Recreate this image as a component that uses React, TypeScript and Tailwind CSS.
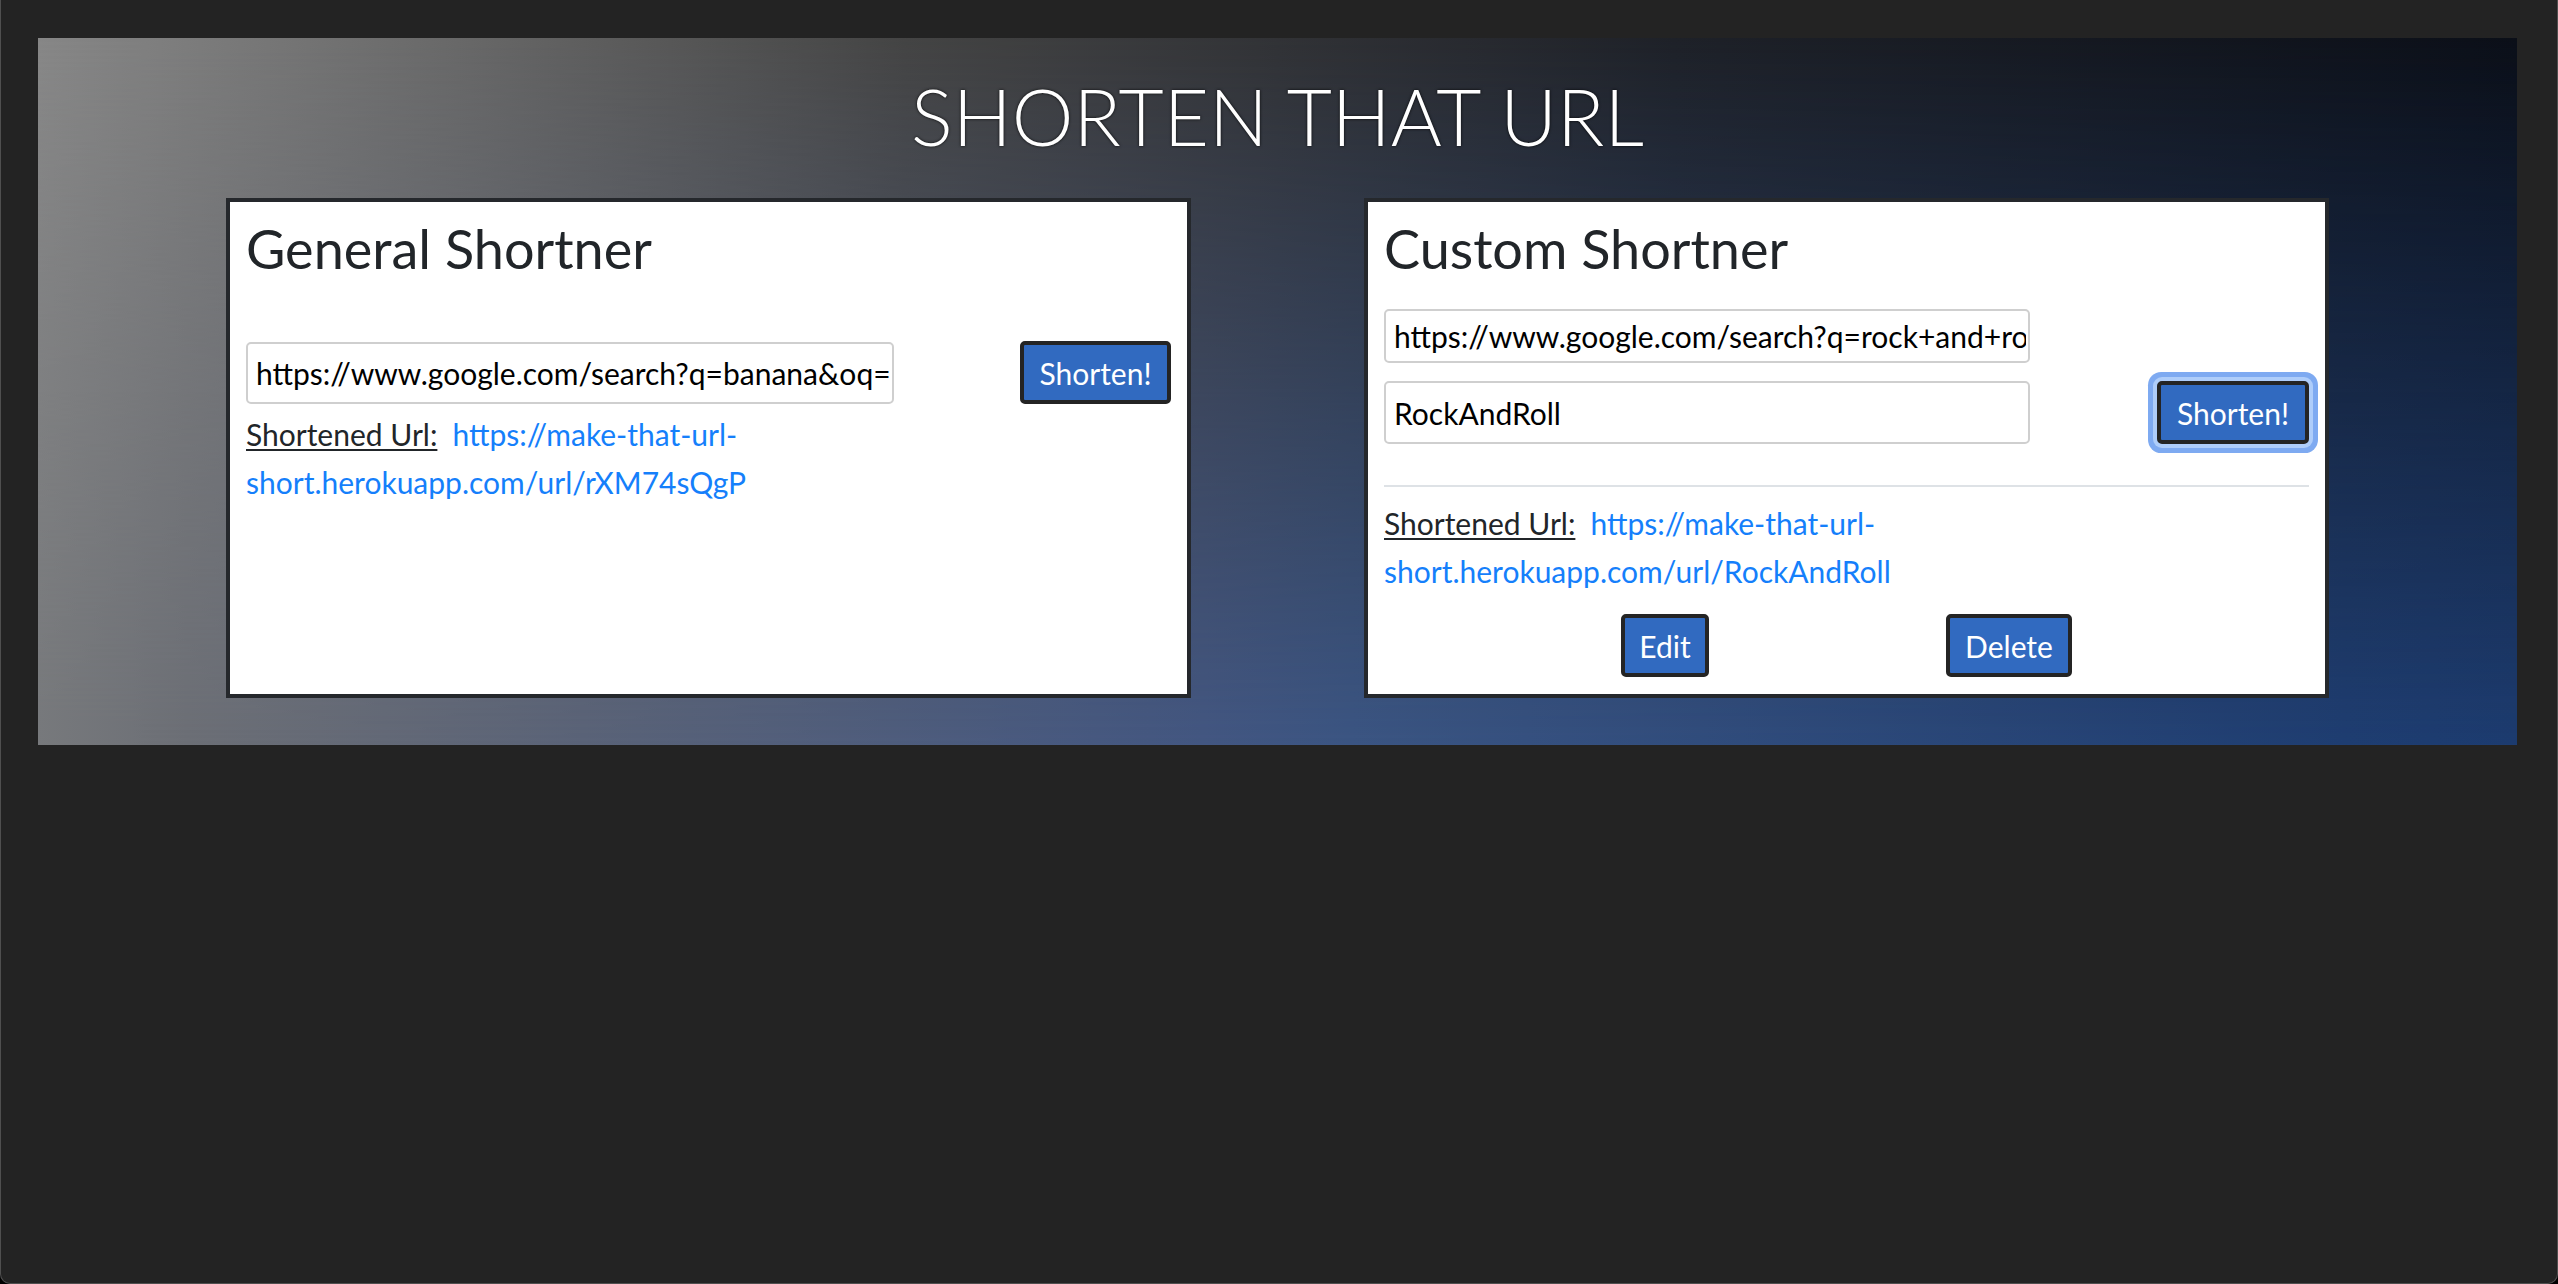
import React from 'react';

const ShortBtn: React.FC<{ label: string; width: string; focused?: boolean }> = ({ label, width, focused }) => (
  <button
    className={`${width} h-[63px] shrink-0 flex items-center justify-center rounded-[5px] border-4 border-[#242424] bg-[#316ac0] text-[30px] leading-none text-white ${
      focused ? 'shadow-[0_0_0_4px_#aecdfa,0_0_0_9px_#7eaaf1]' : ''
    }`}
  >
    {label}
  </button>
);

const UrlInput: React.FC<{ value: string; className: string }> = ({ value, className }) => (
  <input
    readOnly
    value={value}
    className={`${className} rounded-[5px] border-2 border-[#cfcfcf] bg-white pl-[8px] pr-[2px] text-[30px] text-black outline-none`}
  />
);

const ShortLink: React.FC<{ code: string }> = ({ code }) => (
  <p className="text-[30px] leading-[48px] text-[#212529]">
    <span className="underline underline-offset-[3px] decoration-2">Shortened Url:</span>
    <a href="#" className="ml-[15px] text-[#157ffb]">
      <span className="whitespace-nowrap">https://make-that-url-</span>
      <wbr />
      <span className="whitespace-nowrap">short.herokuapp.com/url/{code}</span>
    </a>
  </p>
);

export default function App() {
  return (
    <div className="w-[2558px] h-[1284px] bg-black font-['Lato','Liberation_Sans',sans-serif]">
      <div className="h-full rounded-b-[10px] border-x border-b border-[#4f4f4f] bg-[#232323] pt-[38px]">
        <section className="ml-[37px] grid h-[707px] w-[2479px] isolate">
          {/* bottom row colours */}
          <div className="[grid-area:1/1] bg-[linear-gradient(to_right,#77797c_0%,#6c6f76_6%,#5a6378_22%,#435782_47%,#3b5583_53%,#1f3e72_93%,#1d3c70_100%)]" />
          {/* top row colours, faded downward */}
          <div className="[grid-area:1/1] bg-[linear-gradient(to_right,#878787_0%,#666666_18%,#444444_35%,#313235_50%,#1e2128_66%,#0b0f18_100%)] [mask-image:linear-gradient(to_bottom,black,transparent)]" />

          <div className="relative [grid-area:1/1] flex flex-col items-center pt-[32px]">
            <h1 className="text-[78px] font-light leading-[92px] text-white [text-shadow:0_0_3px_rgba(0,0,0,0.9)]">
              SHORTEN THAT URL
            </h1>

            <div className="mt-[36px] flex gap-[173px]">
              {/* general */}
              <div className="h-[500px] w-[965px] border-4 border-[#25282c] bg-white px-4 pt-[14px]">
                <h2 className="text-[54px] leading-[65px] text-[#212529]">General Shortner</h2>
                <div className="mt-[60px] flex items-center justify-between">
                  <UrlInput
                    className="h-[62px] w-[648px]"
                    value="https://www.google.com/search?q=banana&oq=banana&aqs=chrome..69i57j0l7.1520j0j7&sourceid=chrome&ie=UTF-8"
                  />
                  <ShortBtn label="Shorten!" width="w-[151px]" />
                </div>
                <div className="mt-[6px]">
                  <ShortLink code="rXM74sQgP" />
                </div>
              </div>

              {/* custom */}
              <div className="h-[500px] w-[965px] border-4 border-[#25282c] bg-white px-4 pt-[14px]">
                <h2 className="text-[54px] leading-[65px] text-[#212529]">Custom Shortner</h2>
                <div className="mt-[28px] flex items-end justify-between">
                  <div className="flex flex-col gap-[18px]">
                    <UrlInput className="h-[54px] w-[646px]" value="https://www.google.com/search?q=rock+and+roll" />
                    <UrlInput className="h-[63px] w-[646px]" value="RockAndRoll" />
                  </div>
                  <ShortBtn label="Shorten!" width="w-[152px]" focused />
                </div>
                <hr className="mt-[41px] border-0 border-t-2 border-[#dee2e6]" />
                <div className="mt-[12px]">
                  <ShortLink code="RockAndRoll" />
                </div>
                <div className="mt-[19px] flex justify-evenly">
                  <ShortBtn label="Edit" width="w-[88px]" />
                  <ShortBtn label="Delete" width="w-[126px]" />
                </div>
              </div>
            </div>
          </div>
        </section>
      </div>
    </div>
  );
}
